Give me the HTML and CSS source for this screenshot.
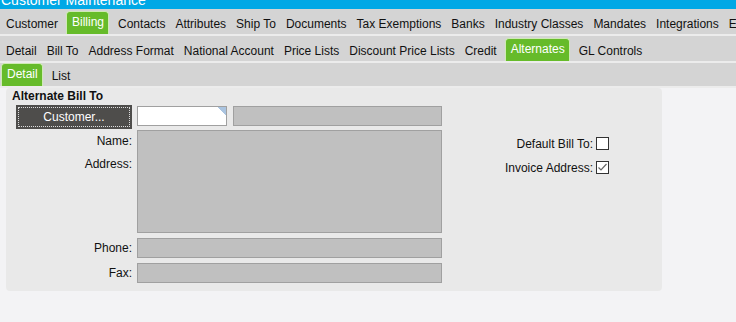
FILE: index.html
```html
<!DOCTYPE html>
<html lang="en">
    <head>
        <meta charset="UTF-8" />
        <meta name="viewport" content="width=device-width, initial-scale=1.0" />
        <title>Customer Maintenance</title>
        <link rel="stylesheet" href="styles.css">
    </head>
    <body>
        <div class="titlebar"><span>Customer Maintenance</span></div>

        <div class="tabs">
            <span class="tab">Customer</span>
            <span class="tab active">Billing</span>
            <span class="tab">Contacts</span>
            <span class="tab">Attributes</span>
            <span class="tab">Ship To</span>
            <span class="tab">Documents</span>
            <span class="tab">Tax Exemptions</span>
            <span class="tab">Banks</span>
            <span class="tab">Industry Classes</span>
            <span class="tab">Mandates</span>
            <span class="tab">Integrations</span>
            <span class="tab">EDI</span>
        </div>

        <div class="tabs">
            <span class="tab">Detail</span>
            <span class="tab">Bill To</span>
            <span class="tab">Address Format</span>
            <span class="tab">National Account</span>
            <span class="tab">Price Lists</span>
            <span class="tab">Discount Price Lists</span>
            <span class="tab">Credit</span>
            <span class="tab active">Alternates</span>
            <span class="tab">GL Controls</span>
        </div>

        <div class="tabs short">
            <span class="tab active">Detail</span>
            <span class="tab">List</span>
        </div>

        <div class="panel">
            <div class="panel-title">Alternate Bill To</div>

            <div class="form">
                <div class="fields">
                    <div class="row first">
                        <button class="lookup"><span>Customer...</span></button>
                        <div class="input"></div>
                        <div class="field wide"></div>
                    </div>
                    <div class="row">
                        <div class="labels">
                            <label>Name:</label>
                            <label>Address:</label>
                        </div>
                        <div class="field area"></div>
                    </div>
                    <div class="row">
                        <label class="label">Phone:</label>
                        <div class="field"></div>
                    </div>
                    <div class="row">
                        <label class="label">Fax:</label>
                        <div class="field"></div>
                    </div>
                </div>

                <div class="options">
                    <div class="option">
                        <label>Default Bill To:</label>
                        <span class="check"></span>
                    </div>
                    <div class="option">
                        <label>Invoice Address:</label>
                        <span class="check">
                            <svg width="11" height="11" viewBox="0 0 11 11"><path d="M1.5 5.5 L4 8 L9.5 2" fill="none" stroke="#666" stroke-width="1.2"/></svg>
                        </span>
                    </div>
                </div>
            </div>
        </div>
    </body>
</html>
```

FILE: styles.css
```css
body {
    margin: 0;
    font-family: "Liberation Sans", Arial, sans-serif;
    font-size: 12px;
    color: #111;
    background-color: #f3f3f5;
    width: 736px;
    height: 322px;
    overflow: hidden;
}

.titlebar {
    height: 9px;
    overflow: hidden;
    background-color: #00a8e6;
    color: #fff;
    font-size: 14px;
    line-height: 0;
    padding-left: 1px;
}

.tabs {
    display: flex;
    align-items: flex-end;
    gap: 1px;
    height: 25px;
    padding-left: 1px;
    background-color: #d4d4d4;
    border-bottom: 2px solid #ececec;
    white-space: nowrap;
    overflow: hidden;
}

.tabs.short {
    height: 23px;
}

.tab {
    padding: 0 4px 0 5px;
    line-height: 20px;
}

.tab.active {
    background-color: #66bb2a;
    color: #fff;
    border: 1px solid #cfeab5;
    border-bottom: none;
    border-radius: 4px 4px 0 0;
    line-height: 20px;
    margin: 0 3px;
    padding-bottom: 2px;
}

.tabs .tab.active:first-child {
    margin-left: 0;
}

.panel {
    width: 656px;
    height: 203px;
    margin-left: 6px;
    background-color: #e9e9e9;
    border-radius: 4px;
}

.panel-title {
    padding: 1px 0 0 6px;
    font-weight: bold;
    line-height: 14px;
}

.form {
    display: flex;
}

.fields {
    flex: none;
    width: 426px;
    margin-left: 10px;
}

.row {
    display: flex;
    gap: 5px;
    margin-bottom: 5px;
}

.row.first {
    margin-top: 2px;
    margin-bottom: 1px;
}

.lookup {
    width: 116px;
    height: 24px;
    padding: 2px;
    margin: 0;
    border: none;
    background-color: #4e4d4b;
    font: inherit;
    color: #fff;
}

.lookup span {
    display: block;
    height: 18px;
    line-height: 18px;
    border: 1px dotted #ddd;
}

.input {
    width: 88px;
    height: 18px;
    margin-top: 1px;
    background: linear-gradient(45deg, #fff 50%, #aac4e0 50%) no-repeat top right / 8px 8px, #fff;
    border: 1px solid #a0a0a0;
}

.field {
    flex: 1;
    height: 18px;
    background-color: #c0c0c0;
    border: 1px solid #a0a0a0;
}

.field.wide {
    margin-top: 1px;
    margin-left: 1px;
}

.field.area {
    height: 101px;
}

.labels, .label {
    width: 116px;
    flex: none;
    text-align: right;
}

.labels label {
    display: block;
    line-height: 23px;
}

.label {
    line-height: 20px;
}

.options {
    flex: none;
    width: 167px;
    margin-top: 34px;
    display: flex;
    flex-direction: column;
    align-items: flex-end;
    gap: 11px;
}

.option {
    display: flex;
    align-items: center;
    gap: 3px;
    height: 13px;
}

.check {
    width: 11px;
    height: 11px;
    border: 1px solid #333;
    background-color: #fff;
    display: block;
}

.check svg {
    display: block;
}
```
